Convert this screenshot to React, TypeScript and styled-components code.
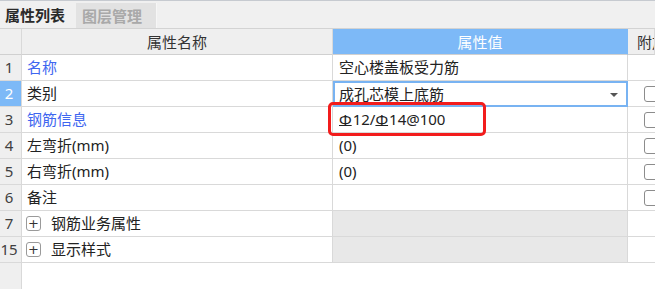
import React from "react";
import styled, { createGlobalStyle, css } from "styled-components";

const Global = createGlobalStyle`
  html, body { margin: 0; padding: 0; background: #ffffff; }
  body {
    font-family: "Noto Sans", "Noto Sans CJK SC", sans-serif;
    font-size: 15px;
    color: #222;
  }
  * { box-sizing: border-box; }
`;

const Panel = styled.div`
  width: 655px;
  height: 289px;
  overflow: hidden;
  background: linear-gradient(to right, #efefef 21px, #d9d9d9 21px, #d9d9d9 22px, #ffffff 22px);
`;

const TabBar = styled.div`
  display: flex;
  align-items: flex-end;
  height: 29px;
  background: #f0f0f0;
  border-top: 1px solid #c6cad0;
  border-bottom: 1px solid #d3d3d3;
  gap: 4px;
`;

const Tab = styled.div<{ $active?: boolean }>`
  height: ${(p) => (p.$active ? "27px" : "25px")};
  display: flex;
  align-items: center;
  padding: 0 6px 0 5px;
  font-family: "Noto Sans CJK SC", sans-serif;
  font-size: 15px;
  line-height: 1;
  ${(p) =>
    p.$active
      ? css`
          width: 72px;
          font-weight: 700;
          color: #2a2a2a;
          background: #f0f0f0;
        `
      : css`
          width: 81px;
          padding-left: 6px;
          font-weight: 700;
          color: #a9a9a9;
          background: #e2e2e2;
          border-right: 1px solid #f6f6f6;
        `}
`;

const Table = styled.div`
  display: grid;
  grid-template-columns: 22px 311px 295px 27px;
  grid-auto-rows: 26px;
`;

const HeadCell = styled.div<{ $accent?: boolean; $align?: "left" | "center" }>`
  display: flex;
  align-items: center;
  justify-content: ${(p) => (p.$align === "left" ? "flex-start" : "center")};
  padding-left: ${(p) => (p.$align === "left" ? "9px" : "0")};
  white-space: nowrap;
  overflow: hidden;
  font-family: "Noto Sans CJK SC", sans-serif;
  font-size: 15px;
  line-height: 1;
  background: ${(p) => (p.$accent ? "#7db9f7" : "#efefef")};
  color: ${(p) => (p.$accent ? "#ffffff" : "#333333")};
  border-right: 1px solid ${(p) => (p.$accent ? "#7db9f7" : "#d9d9d9")};
  border-bottom: 1px solid #d0d0d0;
`;

const NumCell = styled.div<{ $selected?: boolean }>`
  display: flex;
  align-items: center;
  justify-content: center;
  font-size: 15px;
  line-height: 1;
  padding-right: 3px;
  color: ${(p) => (p.$selected ? "#ffffff" : "#404040")};
  background: ${(p) => (p.$selected ? "#7db9f7" : "#efefef")};
  border-right: 1px solid #d9d9d9;
  border-bottom: 1px solid #d9d9d9;
`;

const NameCell = styled.div<{ $link?: boolean }>`
  display: flex;
  align-items: center;
  gap: 10px;
  padding-left: 5px;
  white-space: nowrap;
  line-height: 1;
  color: ${(p) => (p.$link ? "#3e66f0" : "#222222")};
  background: #ffffff;
  border-right: 1px solid #d9d9d9;
  border-bottom: 1px solid #d9d9d9;
`;

const ValueCell = styled.div<{ $shaded?: boolean; $editing?: boolean }>`
  position: relative;
  display: flex;
  align-items: center;
  padding-left: 6px;
  white-space: nowrap;
  line-height: 1;
  color: #222;
  background: ${(p) => (p.$shaded ? "#e8e8e8" : "#ffffff")};
  border-right: 1px solid #d9d9d9;
  border-bottom: 1px solid #d9d9d9;
  ${(p) =>
    p.$editing &&
    css`
      border: 2px solid #78b3f2;
      padding-left: 4px;
    `}
`;

const DropArrow = styled.span`
  position: absolute;
  right: 8px;
  top: 10px;
  width: 0;
  height: 0;
  border-left: 4px solid transparent;
  border-right: 4px solid transparent;
  border-top: 4px solid #555;
`;

const Highlight = styled.div`
  position: absolute;
  z-index: 2;
  left: -5px;
  top: -5px;
  width: 158px;
  height: 34px;
  border: 3px solid #f21c1c;
  border-radius: 5px;
  pointer-events: none;
`;

const ExtraCell = styled.div`
  display: flex;
  align-items: center;
  padding-left: 16px;
  overflow: hidden;
  background: #ffffff;
  border-bottom: 1px solid #d9d9d9;
`;

const CheckBox = styled.span`
  flex: none;
  width: 16px;
  height: 16px;
  border: 1px solid #8c8c8c;
  border-radius: 3px;
  background: #fff;
`;

const Expander = styled.span`
  flex: none;
  width: 15px;
  height: 15px;
  margin-left: -1px;
  border: 1px solid #9a9a9a;
  border-radius: 3px;
  display: flex;
  align-items: center;
  justify-content: center;
  font-family: "DejaVu Sans", sans-serif;
  font-size: 13px;
  line-height: 1;
  color: #333;
`;

const Rebar = styled.span`
  font-family: "Noto Sans", sans-serif;
  font-size: 15px;
  text-decoration: underline;
  text-decoration-thickness: 1px;
  text-underline-offset: 0px;
  margin-right: 1px;
`;

type Row = {
  no: string;
  name: string;
  link?: boolean;
  value?: React.ReactNode;
  group?: boolean;
  check?: boolean;
  selected?: boolean;
  editing?: boolean;
  highlight?: boolean;
};

const rows: Row[] = [
  { no: "1", name: "名称", link: true, value: "空心楼盖板受力筋" },
  { no: "2", name: "类别", value: "成孔芯模上底筋", check: true, selected: true, editing: true },
  {
    no: "3",
    name: "钢筋信息",
    link: true,
    check: true,
    highlight: true,
    value: (
      <>
        <Rebar>Φ</Rebar>12/<Rebar>Φ</Rebar>14@100
      </>
    ),
  },
  { no: "4", name: "左弯折(mm)", value: "(0)", check: true },
  { no: "5", name: "右弯折(mm)", value: "(0)", check: true },
  { no: "6", name: "备注", value: "", check: true },
  { no: "7", name: "钢筋业务属性", group: true },
  { no: "15", name: "显示样式", group: true },
];

export default function App() {
  return (
    <Panel>
      <Global />
      <TabBar>
        <Tab $active>属性列表</Tab>
        <Tab>图层管理</Tab>
      </TabBar>
      <Table>
        <HeadCell />
        <HeadCell>属性名称</HeadCell>
        <HeadCell $accent>属性值</HeadCell>
        <HeadCell $align="left">附加</HeadCell>
        {rows.map((r) => (
          <React.Fragment key={r.no}>
            <NumCell $selected={r.selected}>{r.no}</NumCell>
            <NameCell $link={r.link}>
              {r.group && <Expander>+</Expander>}
              {r.name}
            </NameCell>
            <ValueCell $shaded={r.group} $editing={r.editing}>
              {r.value}
              {r.editing && <DropArrow />}
              {r.highlight && <Highlight />}
            </ValueCell>
            <ExtraCell>{r.check && <CheckBox />}</ExtraCell>
          </React.Fragment>
        ))}
      </Table>
    </Panel>
  );
}
